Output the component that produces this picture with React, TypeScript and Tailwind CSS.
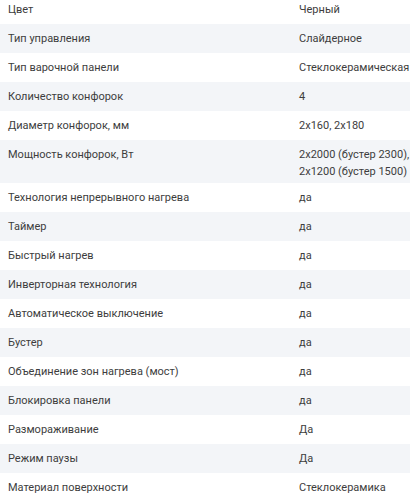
const specs: { label: string; value: string[] }[] = [
  { label: "Цвет", value: ["Черный"] },
  { label: "Тип управления", value: ["Слайдерное"] },
  { label: "Тип варочной панели", value: ["Стеклокерамическая"] },
  { label: "Количество конфорок", value: ["4"] },
  { label: "Диаметр конфорок, мм", value: ["2x160, 2x180"] },
  {
    label: "Мощность конфорок, Вт",
    value: ["2x2000 (бустер 2300),", "2x1200 (бустер 1500)"],
  },
  { label: "Технология непрерывного нагрева", value: ["да"] },
  { label: "Таймер", value: ["да"] },
  { label: "Быстрый нагрев", value: ["да"] },
  { label: "Инверторная технология", value: ["да"] },
  { label: "Автоматическое выключение", value: ["да"] },
  { label: "Бустер", value: ["да"] },
  { label: "Объединение зон нагрева (мост)", value: ["да"] },
  { label: "Блокировка панели", value: ["да"] },
  { label: "Размораживание", value: ["Да"] },
  { label: "Режим паузы", value: ["Да"] },
  { label: "Материал поверхности", value: ["Стеклокерамика"] },
];

export default function App() {
  return (
    <div className="h-[500px] w-[410px] overflow-hidden bg-white font-['Roboto','Liberation_Sans',sans-serif] text-[11px] text-[#3d3d3d]">
      <dl className="-mt-[5px]">
        {specs.map((row, i) => (
          <div
            key={row.label}
            className={
              (i % 2 === 1 ? "bg-[#f3f5f8] " : "bg-white ") +
              (row.value.length > 1 ? "pt-[6px] pb-[3px] " : "py-[6px] ") +
              "flex leading-[17px]"
            }
          >
            <dt className="w-[299px] shrink-0 pl-[8px]">{row.label}</dt>
            <dd className="whitespace-nowrap">
              {row.value.map((line) => (
                <div key={line}>{line}</div>
              ))}
            </dd>
          </div>
        ))}
      </dl>
    </div>
  );
}
